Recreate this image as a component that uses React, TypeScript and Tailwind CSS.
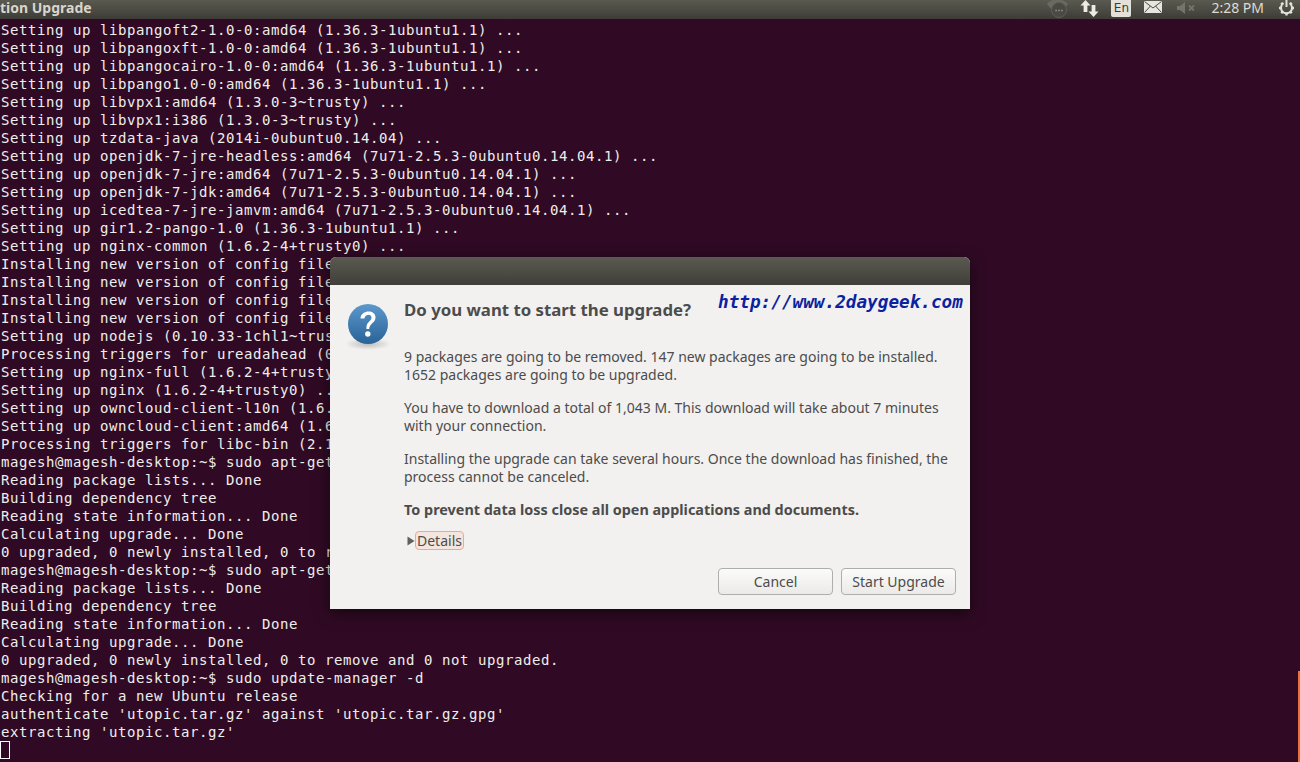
const lines = [
  'Setting up libpangoft2-1.0-0:amd64 (1.36.3-1ubuntu1.1) ...',
  'Setting up libpangoxft-1.0-0:amd64 (1.36.3-1ubuntu1.1) ...',
  'Setting up libpangocairo-1.0-0:amd64 (1.36.3-1ubuntu1.1) ...',
  'Setting up libpango1.0-0:amd64 (1.36.3-1ubuntu1.1) ...',
  'Setting up libvpx1:amd64 (1.3.0-3~trusty) ...',
  'Setting up libvpx1:i386 (1.3.0-3~trusty) ...',
  'Setting up tzdata-java (2014i-0ubuntu0.14.04) ...',
  'Setting up openjdk-7-jre-headless:amd64 (7u71-2.5.3-0ubuntu0.14.04.1) ...',
  'Setting up openjdk-7-jre:amd64 (7u71-2.5.3-0ubuntu0.14.04.1) ...',
  'Setting up openjdk-7-jdk:amd64 (7u71-2.5.3-0ubuntu0.14.04.1) ...',
  'Setting up icedtea-7-jre-jamvm:amd64 (7u71-2.5.3-0ubuntu0.14.04.1) ...',
  'Setting up gir1.2-pango-1.0 (1.36.3-1ubuntu1.1) ...',
  'Setting up nginx-common (1.6.2-4+trusty0) ...',
  'Installing new version of config file /etc/nginx/nginx.conf ...',
  'Installing new version of config file /etc/nginx/sites-available/default ...',
  'Installing new version of config file /etc/nginx/mime.types ...',
  'Installing new version of config file /etc/nginx/fastcgi_params ...',
  'Setting up nodejs (0.10.33-1chl1~trusty1) ...',
  'Processing triggers for ureadahead (0.100.0-16) ...',
  'Setting up nginx-full (1.6.2-4+trusty0) ...',
  'Setting up nginx (1.6.2-4+trusty0) ...',
  'Setting up owncloud-client-l10n (1.6.4-1) ...',
  'Setting up owncloud-client:amd64 (1.6.4-1) ...',
  'Processing triggers for libc-bin (2.19-0ubuntu6.3) ...',
  'magesh@magesh-desktop:~$ sudo apt-get upgrade',
  'Reading package lists... Done',
  'Building dependency tree',
  'Reading state information... Done',
  'Calculating upgrade... Done',
  '0 upgraded, 0 newly installed, 0 to remove and 0 not upgraded.',
  'magesh@magesh-desktop:~$ sudo apt-get dist-upgrade',
  'Reading package lists... Done',
  'Building dependency tree',
  'Reading state information... Done',
  'Calculating upgrade... Done',
  '0 upgraded, 0 newly installed, 0 to remove and 0 not upgraded.',
  'magesh@magesh-desktop:~$ sudo update-manager -d',
  'Checking for a new Ubuntu release',
  "authenticate 'utopic.tar.gz' against 'utopic.tar.gz.gpg'",
  "extracting 'utopic.tar.gz'",
]

const TopBar = () => (
  <div className="flex h-[19px] items-start justify-between bg-gradient-to-b from-[#5b5a51] to-[#3d3c37] font-['Noto_Sans',sans-serif]">
    <span className="text-[14px] font-bold leading-[15px] text-[#d9d5cc]">tion Upgrade</span>
    <div className="flex items-start text-[#dfdbd2]">
      <svg width="24" height="19" viewBox="0 0 24 19" className="mr-[10px]">
        <path d="M1 4 C6 -2 16 -2 22 4 L17 10 C13 7 10 7 6 10Z" fill="#6b6a62" />
        <circle cx="13" cy="10" r="7.5" fill="#4a4944" stroke="#5f5e56" />
        <path d="M9.3 10.5h1.6M12.2 10.5h1.6M15.1 10.5h1.6" stroke="#8f8e85" strokeWidth="1.5" />
      </svg>
      <svg width="20" height="17" viewBox="0 0 20 17" className="mr-[11px]">
        <path d="M5.5 0 L10.5 5.5 H7.4 V12 H3.6 V5.5 H0.5Z" fill="#efebe3" />
        <path d="M13.5 17 L8.5 11.5 H11.6 V5 H15.4 V11.5 H18.5Z" fill="#efebe3" />
      </svg>
      <span className="mr-[13px] flex h-[17px] w-[20px] items-center justify-center rounded-b-[2px] bg-[#e4e1da] font-['DejaVu_Sans',sans-serif] text-[12px] leading-[15px] text-[#3a3934]">En</span>
      <svg width="18" height="12" viewBox="0 0 18 12" className="mr-[14px] mt-px">
        <rect x="0" y="0" width="18" height="12" fill="#e8e5de" />
        <path d="M0.5 0.5 L9 7 L17.5 0.5 M0.5 11.5 L6.5 5 M17.5 11.5 L11.5 5" fill="none" stroke="#4a4943" strokeWidth="1" />
      </svg>
      <svg width="20" height="12" viewBox="0 0 20 12" className="mr-[15px] mt-[2px]">
        <path d="M1 4 H4 L9 0 V12 L4 8 H1Z" fill="#75746c" />
        <path d="M13 3.5 L18 8.5 M18 3.5 L13 8.5" stroke="#75746c" strokeWidth="1.8" />
      </svg>
      <span className="mr-[14px] text-[14px] leading-[15px] text-[#dfdbd2]">2:28 PM</span>
      <svg width="17" height="16" viewBox="0 0 17 16" className="mr-[5px]">
        <path d="M5.5 3.2 A5.5 5.5 0 1 0 11.5 3.2" fill="none" stroke="#e4e1da" strokeWidth="2" />
        <path d="M8.5 0 V7" stroke="#e4e1da" strokeWidth="2" />
        <path d="M8.5 12.5V15.5M1 8H3.4M13.6 8H16M3.2 2.8L4.8 4.4M12.2 11.6L13.8 13.2M13.8 2.8L12.2 4.4M4.8 11.6L3.2 13.2" stroke="#e4e1da" strokeWidth="2.4" />
      </svg>
    </div>
  </div>
)

const Terminal = () => (
  <div className="flex-1 overflow-hidden pl-px pt-[2px] font-['DejaVu_Sans_Mono',monospace] text-[14px] leading-[18px] tracking-[0.57px] text-[#eeeeec]">
    {lines.map((line, i) => (
      <div key={i} className="h-[18px] whitespace-pre">
        {line}
      </div>
    ))}
    <div className="h-[18px] w-[10px] -translate-x-px border border-white" />
  </div>
)

const QuestionIcon = () => (
  <svg width="48" height="50" viewBox="0 0 48 50" className="mt-[3px] shrink-0">
    <defs>
      <linearGradient id="q" x1="0" y1="0" x2="0" y2="1">
        <stop offset="0" stopColor="#5c98cd" />
        <stop offset="1" stopColor="#296397" />
      </linearGradient>
      <radialGradient id="s">
        <stop offset="0" stopColor="#000" stopOpacity="0.22" />
        <stop offset="1" stopColor="#000" stopOpacity="0" />
      </radialGradient>
    </defs>
    <ellipse cx="24" cy="41" rx="23" ry="6" fill="url(#s)" />
    <circle cx="24" cy="21" r="20" fill="url(#q)" />
    <path d="M16.5 15.5 C17 6.5 31.5 6.5 31.5 14.5 C31.5 20 25.5 20 25.2 26 H22.4 C22 18.5 27.5 18.5 27.5 14.8 C27.5 10.5 21 11 20.4 15.5Z" fill="#fff" />
    <circle cx="23.8" cy="31" r="2.7" fill="#fff" />
  </svg>
)

const Dialog = () => (
  <div className="absolute left-[330px] top-[257px] flex h-[352px] w-[640px] flex-col overflow-hidden rounded-t-[6px] bg-[#f2f1f0] font-['Noto_Sans',sans-serif] text-[14px] leading-[18px] text-[#4c4c4c] shadow-[0_4px_16px_rgba(0,0,0,0.55)]">
    <div className="h-[28px] bg-gradient-to-b from-[#5b5a51] to-[#3f3e39]" />
    <div className="relative flex flex-1 pl-[14px] pt-[15px]">
      <QuestionIcon />
      <div className="ml-[12px] flex-1 whitespace-nowrap pr-[14px]">
        <h1 className="w-fit text-[16.8px] font-bold leading-[20px]">Do you want to start the upgrade?</h1>
        <p className="mt-[28px]">
          9 packages are going to be removed. 147 new packages are going to be installed.
          <br />
          1652 packages are going to be upgraded.
        </p>
        <p className="mt-[15px]">
          You have to download a total of 1,043 M. This download will take about 7 minutes
          <br />
          with your connection.
        </p>
        <p className="mt-[15px]">
          Installing the upgrade can take several hours. Once the download has finished, the
          <br />
          process cannot be canceled.
        </p>
        <p className="mt-[15px] text-[14.4px] font-bold">To prevent data loss close all open applications and documents.</p>
        <div className="mt-[12px] flex items-center">
          <svg width="8" height="10" viewBox="0 0 8 10" className="ml-[3px]">
            <path d="M0.5 0.5 L7.5 5 L0.5 9.5Z" fill="#5f5f5f" />
          </svg>
          <span className="rounded-[4px] border border-[#f0a88c] bg-[#f4e5df] px-px leading-[17px]">Details</span>
        </div>
        <div className="mt-[18px] flex justify-end gap-[8px]">
          <button className="h-[27px] w-[115px] rounded-[4px] border border-[#b0aeaa] bg-gradient-to-b from-[#fbfbfa] to-[#ebeae8]">Cancel</button>
          <button className="h-[27px] w-[115px] rounded-[4px] border border-[#b0aeaa] bg-gradient-to-b from-[#fbfbfa] to-[#ebeae8]">Start Upgrade</button>
        </div>
      </div>
      <span className="absolute left-[388px] top-[5px] whitespace-pre font-['DejaVu_Sans_Mono',monospace] text-[17.7px] font-bold italic leading-[24px] text-[#0b22a0]">http://www.2daygeek.com</span>
    </div>
  </div>
)

export default function App() {
  return (
    <div className="relative flex h-[762px] w-[1300px] flex-col overflow-hidden bg-[#300a24]">
      <TopBar />
      <Terminal />
      <Dialog />
      <div className="absolute bottom-0 right-0 h-[91px] w-[2px] bg-[#e8733a]" />
    </div>
  )
}
